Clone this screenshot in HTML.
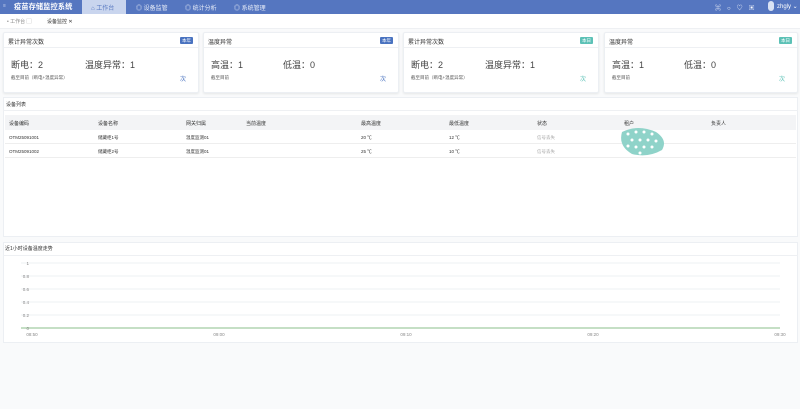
<!DOCTYPE html><html><head><meta charset="utf-8"><style>
*{margin:0;padding:0;box-sizing:border-box}
body{width:800px;height:409px;background:#fff;font-family:"Liberation Sans","Noto Sans CJK SC",sans-serif;color:#333;position:relative;overflow:hidden;font-size:6px}
.hd{position:absolute;left:0;top:0;width:800px;height:14px;background:#5576c0}
.abs{position:absolute;white-space:nowrap}
.card{position:absolute;top:32px;height:61px;background:#fff;border:1px solid #eceff3;box-shadow:0 1px 2px rgba(0,0,0,.08);border-radius:2px}
.card .t{position:absolute;left:4px;top:4px;font-size:6px;color:#333}
.card .line{position:absolute;left:0;right:0;top:14px;border-top:1px solid #eef0f3}
.card .tag{position:absolute;right:5px;top:4px;height:7px;padding:0 2px;font-size:4.5px;line-height:7px;color:#fff;border-radius:1px}
.card .v{position:absolute;font-size:9px;color:#444;top:25px}
.card .s{position:absolute;left:7px;top:42px;font-size:4.5px;color:#555}
.card .c{position:absolute;right:12px;top:41px;font-size:6px}
</style></head><body>
<div class="hd"></div>
<div class="abs" style="left:3px;top:3px;color:#c9d4ee;font-size:5px">≡</div>
<div class="abs" style="left:14px;top:2px;color:#fff;font-size:7.3px;font-weight:bold">疫苗存储监控系统</div>
<div class="abs" style="left:82px;top:0;width:44px;height:14px;background:#c9d5ee"></div>
<div class="abs" style="left:91px;top:3px;color:#5576c0;font-size:6px">⌂ 工作台</div>
<div class="abs" style="left:136px;top:3px;color:#e8edf8;font-size:6px">◎ 设备监管</div>
<div class="abs" style="left:185px;top:3px;color:#e8edf8;font-size:6px">◎ 统计分析</div>
<div class="abs" style="left:234px;top:3px;color:#e8edf8;font-size:6px">◎ 系统管理</div>
<div class="abs" style="left:715px;top:3px;color:#fff;font-size:6px;letter-spacing:6px">⌘○♡▣</div>
<div class="abs" style="left:768px;top:1px;width:6px;height:10px;background:#d9e2f4;border-radius:3px"></div>
<div class="abs" style="left:777px;top:3px;color:#fff;font-size:6px">zhgly ⌄</div>
<div class="abs" style="left:0;top:14px;width:800px;height:15px;border-bottom:1px solid #eef0f3"></div>
<div class="abs" style="left:7px;top:18px;color:#888;font-size:5px">• 工作台 ▢</div>
<div class="abs" style="left:47px;top:18px;color:#333;font-size:5px">设备监控 ✕</div>
<div class="abs" style="left:0;top:29px;width:800px;height:380px;background:#f9fafb;z-index:-1"></div>

<div class="card" style="left:3px;width:196px"><div class="t">累计异常次数</div><div class="line"></div><div class="tag" style="background:#4a73c0">本年</div><div class="v" style="left:7px">断电：2</div><div class="v" style="left:81px">温度异常：1</div><div class="s">截至目前（断电+温度异常）</div><div class="c" style="color:#4a73c0">次</div></div>
<div class="card" style="left:203px;width:196px"><div class="t">温度异常</div><div class="line"></div><div class="tag" style="background:#4a73c0">本年</div><div class="v" style="left:7px">高温：1</div><div class="v" style="left:79px">低温：0</div><div class="s">截至目前</div><div class="c" style="color:#4a73c0">次</div></div>
<div class="card" style="left:403px;width:196px"><div class="t">累计异常次数</div><div class="line"></div><div class="tag" style="background:#5cc1b6">本日</div><div class="v" style="left:7px">断电：2</div><div class="v" style="left:81px">温度异常：1</div><div class="s">截至目前（断电+温度异常）</div><div class="c" style="color:#5cc1b6">次</div></div>
<div class="card" style="left:604px;width:194px"><div class="t">温度异常</div><div class="line"></div><div class="tag" style="background:#5cc1b6">本日</div><div class="v" style="left:7px">高温：1</div><div class="v" style="left:79px">低温：0</div><div class="s">截至目前</div><div class="c" style="color:#5cc1b6">次</div></div>

<div class="abs" style="left:3px;top:97px;width:795px;height:140px;background:#fff;border:1px solid #eceff3"></div>
<div class="abs" style="left:6px;top:101px;font-size:5px">设备列表</div>
<div class="abs" style="left:3px;top:110px;width:795px;border-top:1px solid #eef0f3"></div>
<div class="abs" style="left:5px;top:115px;width:791px;height:15px;background:#f3f4f6"></div>
<div class="abs" style="left:5px;top:143px;width:791px;border-top:1px solid #eee"></div>
<div class="abs" style="left:5px;top:157px;width:791px;border-top:1px solid #eee"></div>
<div style="font-size:5px">
<div class="abs" style="left:9px;top:120px">设备编码</div><div class="abs" style="left:98px;top:120px">设备名称</div><div class="abs" style="left:186px;top:120px">网关归属</div><div class="abs" style="left:246px;top:120px">当前温度</div><div class="abs" style="left:361px;top:120px">最高温度</div><div class="abs" style="left:449px;top:120px">最低温度</div><div class="abs" style="left:537px;top:120px">状态</div><div class="abs" style="left:624px;top:120px">租户</div><div class="abs" style="left:711px;top:120px">负责人</div>
<div class="abs" style="left:9px;top:135px;font-size:4.5px">OTM25091001</div><div class="abs" style="left:98px;top:135px;font-size:4.5px">储藏柜1号</div><div class="abs" style="left:186px;top:135px;font-size:4.5px">温度监测01</div><div class="abs" style="left:361px;top:135px;font-size:4.5px">20 ℃</div><div class="abs" style="left:449px;top:135px;font-size:4.5px">12 ℃</div><div class="abs" style="left:537px;top:135px;font-size:4.5px;color:#aaa">信号丢失</div>
<div class="abs" style="left:9px;top:149px;font-size:4.5px">OTM25091002</div><div class="abs" style="left:98px;top:149px;font-size:4.5px">储藏柜2号</div><div class="abs" style="left:186px;top:149px;font-size:4.5px">温度监测01</div><div class="abs" style="left:361px;top:149px;font-size:4.5px">25 ℃</div><div class="abs" style="left:449px;top:149px;font-size:4.5px">10 ℃</div><div class="abs" style="left:537px;top:149px;font-size:4.5px;color:#aaa">信号丢失</div>
</div>
<svg class="abs" style="left:618px;top:126px" width="48" height="30"><path d="M4 6 Q20 -2 38 6 Q50 14 44 24 Q30 32 14 28 Q0 20 4 6Z" fill="#8fd3c9"/><g fill="#fff"><circle cx="10" cy="8" r="1.5"/><circle cx="18" cy="6" r="1.5"/><circle cx="26" cy="6" r="1.5"/><circle cx="34" cy="8" r="1.5"/><circle cx="14" cy="14" r="1.5"/><circle cx="22" cy="14" r="1.5"/><circle cx="30" cy="14" r="1.5"/><circle cx="38" cy="15" r="1.5"/><circle cx="10" cy="20" r="1.5"/><circle cx="18" cy="21" r="1.5"/><circle cx="26" cy="21" r="1.5"/><circle cx="34" cy="21" r="1.5"/><circle cx="22" cy="27" r="1.5"/></g></svg>

<div class="abs" style="left:3px;top:242px;width:795px;height:101px;background:#fff;border:1px solid #eceff3"></div>
<div class="abs" style="left:5px;top:245px;font-size:5px">近1小时设备温度走势</div>
<div class="abs" style="left:3px;top:255px;width:795px;border-top:1px solid #eef0f3"></div>
<svg class="abs" style="left:0;top:255px" width="800" height="88" font-family="Liberation Sans" font-size="4.5" fill="#888">
<g stroke="#eef0f3" stroke-width="1"><line x1="21" y1="8" x2="780" y2="8"/><line x1="21" y1="21" x2="780" y2="21"/><line x1="21" y1="34" x2="780" y2="34"/><line x1="21" y1="47" x2="780" y2="47"/><line x1="21" y1="60" x2="780" y2="60"/></g>
<line x1="21" y1="73" x2="780" y2="73" stroke="#8bbf8b" stroke-width="1"/>
<g text-anchor="end"><text x="29" y="10">1</text><text x="29" y="23">0.8</text><text x="29" y="36">0.6</text><text x="29" y="49">0.4</text><text x="29" y="62">0.2</text><text x="29" y="75">0</text></g>
<g text-anchor="middle"><text x="32" y="81">08:50</text><text x="219" y="81">09:00</text><text x="406" y="81">09:10</text><text x="593" y="81">09:20</text><text x="780" y="81">09:30</text></g>
</svg>
</body></html>
